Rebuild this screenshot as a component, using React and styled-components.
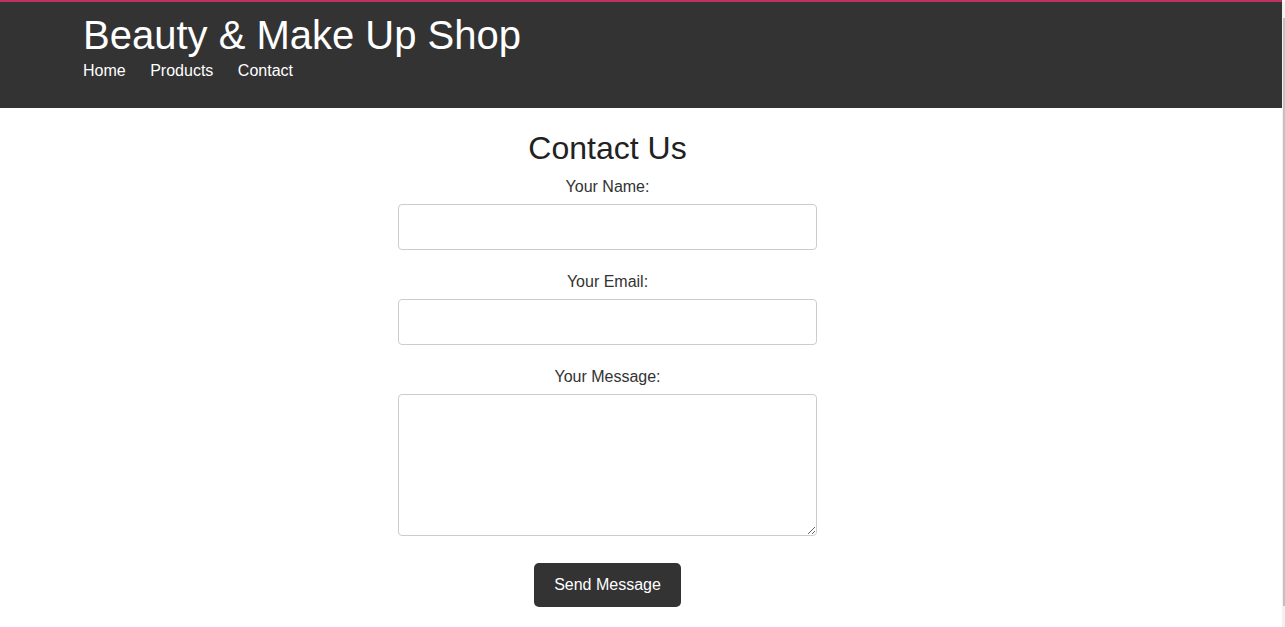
import React from 'react';
import styled, { createGlobalStyle } from 'styled-components';

const GlobalStyle = createGlobalStyle`
  html, body {
    margin: 0;
    padding: 0;
    overflow: hidden;
  }

  body {
    background: #fff;
    color: #333;
    font-family: Arial, "Liberation Sans", Helvetica, sans-serif;
  }
`;

const Page = styled.div`
  border-top: 2px solid #c03266;
  margin-right: 3px;
`;

const Header = styled.header`
  background: #333;
  color: #fff;
  height: 106px;
  box-sizing: border-box;
  padding: 10px 0 0 83px;
`;

const ShopTitle = styled.h1`
  font-size: 40px;
  font-weight: normal;
  line-height: 46px;
  margin: 0;
`;

const Nav = styled.nav`
  display: flex;
  gap: 24.5px;
  margin-top: 4px;
`;

const NavLink = styled.a`
  color: #fff;
  font-size: 16px;
  line-height: 18px;
  text-decoration: none;
`;

const Main = styled.main`
  width: 1049px;
  margin-left: 83px;
  padding-top: 22px;
`;

const ContactForm = styled.form`
  width: 419px;
  margin: 0 auto;
  display: flex;
  flex-direction: column;
  align-items: center;
`;

const Heading = styled.h2`
  font-size: 32px;
  font-weight: normal;
  line-height: 37px;
  color: #222;
  margin: 0 0 11px;
`;

const Label = styled.label`
  font-size: 16px;
  line-height: 18px;
  color: #333;
  margin-bottom: 8px;
`;

const Input = styled.input`
  box-sizing: border-box;
  width: 100%;
  height: 46px;
  border: 1px solid #ccc;
  border-radius: 4px;
  padding: 10px;
  font-size: 16px;
  font-family: inherit;
  margin-bottom: 23px;
`;

const TextArea = styled.textarea`
  box-sizing: border-box;
  width: 100%;
  height: 142px;
  border: 1px solid #ccc;
  border-radius: 4px;
  padding: 10px;
  font-size: 16px;
  font-family: inherit;
  margin: 0 0 27px;
  display: block;
`;

const SendButton = styled.button`
  background: #333;
  color: #fff;
  border: none;
  border-radius: 5px;
  font-family: inherit;
  font-size: 16px;
  line-height: 18px;
  padding: 13px 20px;
  width: 147px;
  cursor: pointer;
`;

const ScrollTrack = styled.div`
  position: fixed;
  top: 2px;
  right: 0;
  bottom: 0;
  width: 3px;
  background: #f1f1f1;
`;

const ScrollThumb = styled.div`
  margin: 16px 0 0 1px;
  width: 2px;
  height: 588px;
  background: #c1c1c1;
`;

export default function App() {
  return (
    <>
      <GlobalStyle />
      <Page>
        <Header>
          <ShopTitle>Beauty &amp; Make Up Shop</ShopTitle>
          <Nav>
            <NavLink href="#">Home</NavLink>
            <NavLink href="#">Products</NavLink>
            <NavLink href="#">Contact</NavLink>
          </Nav>
        </Header>
        <Main>
          <ContactForm onSubmit={(e) => e.preventDefault()}>
            <Heading>Contact Us</Heading>
            <Label htmlFor="name">Your Name:</Label>
            <Input id="name" type="text" />
            <Label htmlFor="email">Your Email:</Label>
            <Input id="email" type="email" />
            <Label htmlFor="message">Your Message:</Label>
            <TextArea id="message" />
            <SendButton type="submit">Send Message</SendButton>
          </ContactForm>
        </Main>
      </Page>
      <ScrollTrack>
        <ScrollThumb />
      </ScrollTrack>
    </>
  );
}
